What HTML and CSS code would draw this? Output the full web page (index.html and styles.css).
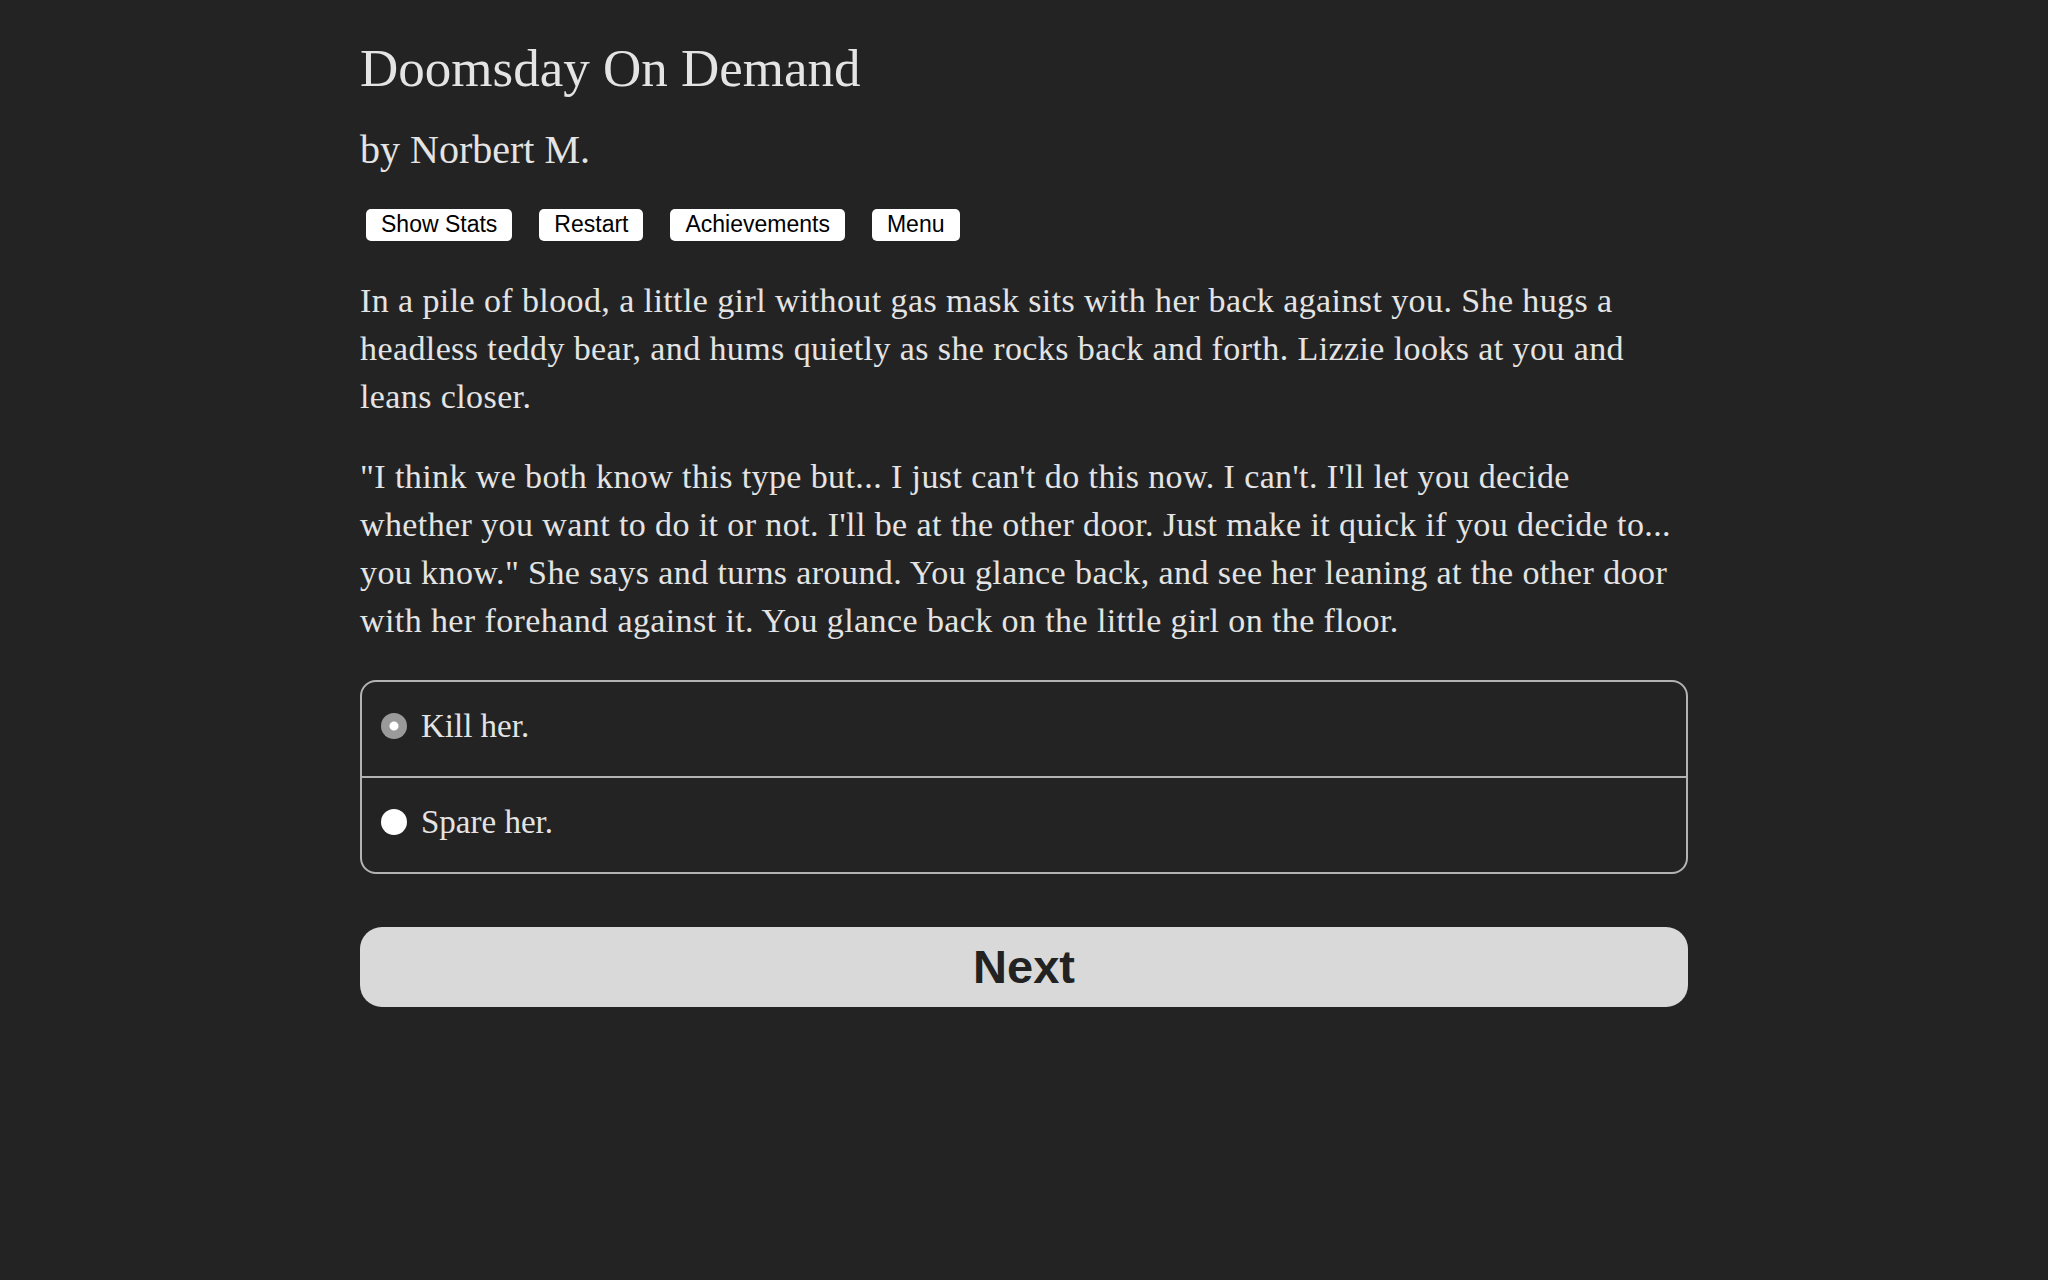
FILE: index.html
```html
<!DOCTYPE html>
<html lang="en">
<head>
    <meta charset="UTF-8">
    <meta name="viewport" content="width=device-width, initial-scale=1.0">
    <title>Doomsday On Demand</title>
    <link rel="stylesheet" href="styles.css">
</head>
<body>
    <div class="container">
        <h1 class="title">Doomsday On Demand</h1>
        <h2 class="author">by Norbert M.</h2>

        <div class="toolbar">
            <button class="tool-btn">Show Stats</button>
            <button class="tool-btn">Restart</button>
            <button class="tool-btn">Achievements</button>
            <button class="tool-btn">Menu</button>
        </div>

        <div class="story">
            <p>In a pile of blood, a little girl without gas mask sits with her back against you. She hugs a headless teddy bear, and hums quietly as she rocks back and forth. Lizzie looks at you and leans closer.</p>
            <p>"I think we both know this type but... I just can't do this now. I can't. I'll let you decide whether you want to do it or not. I'll be at the other door. Just make it quick if you decide to... you know." She says and turns around. You glance back, and see her leaning at the other door with her forehand against it. You glance back on the little girl on the floor.</p>
        </div>

        <form class="choice">
            <label class="option">
                <input type="radio" name="choice" value="0" checked>
                <span>Kill her.</span>
            </label>
            <label class="option">
                <input type="radio" name="choice" value="1">
                <span>Spare her.</span>
            </label>
        </form>

        <button class="next">Next</button>
    </div>
</body>
</html>
```

FILE: styles.css
```css
body {
    margin: 0;
    background-color: #232323;
    color: #e4e4e4;
    font-family: "Palatino Linotype", "Book Antiqua", Palatino, "Liberation Serif", serif;
}
.container {
    width: 1328px;
    margin: 0 auto;
    padding-top: 37px;
}
.title {
    font-size: 53px;
    font-weight: normal;
    line-height: 1.2;
    margin: 0;
}
.author {
    font-size: 40px;
    font-weight: normal;
    line-height: 1.2;
    margin: 25px 0 0;
}
.toolbar {
    display: flex;
    gap: 27px;
    padding-left: 6px;
    margin-top: 35px;
}
.tool-btn {
    height: 32px;
    padding: 0 15px;
    border: none;
    border-radius: 5px;
    background: #fff;
    color: #000;
    font-family: "Liberation Sans", Arial, sans-serif;
    font-size: 23px;
}
.story {
    margin-top: 36px;
    font-size: 34px;
    line-height: 48px;
    letter-spacing: 0.4px;
}
.story p {
    margin: 0 0 32px;
}
.story p:last-child {
    margin-bottom: 0;
}
.choice {
    margin-top: 35px;
    border: 2px solid #b3b3b3;
    border-radius: 16px;
}
.option {
    display: flex;
    align-items: center;
    gap: 14px;
    height: 94px;
    padding: 0 0 5px 19px;
    box-sizing: border-box;
    font-size: 33px;
}
.option + .option {
    height: 96px;
    border-top: 2px solid #b3b3b3;
}
.option input {
    appearance: none;
    width: 26px;
    height: 26px;
    margin: 0;
    border-radius: 50%;
    background: #fff;
    flex-shrink: 0;
}
.option input:checked {
    background: radial-gradient(circle, #fff 0 4px, #9a9a9a 5px);
}
.next {
    display: block;
    width: 100%;
    height: 80px;
    margin-top: 53px;
    border: none;
    border-radius: 22px;
    background: #d9d9d9;
    color: #222;
    font-family: "Liberation Sans", Arial, sans-serif;
    font-size: 47px;
    font-weight: bold;
}
```
